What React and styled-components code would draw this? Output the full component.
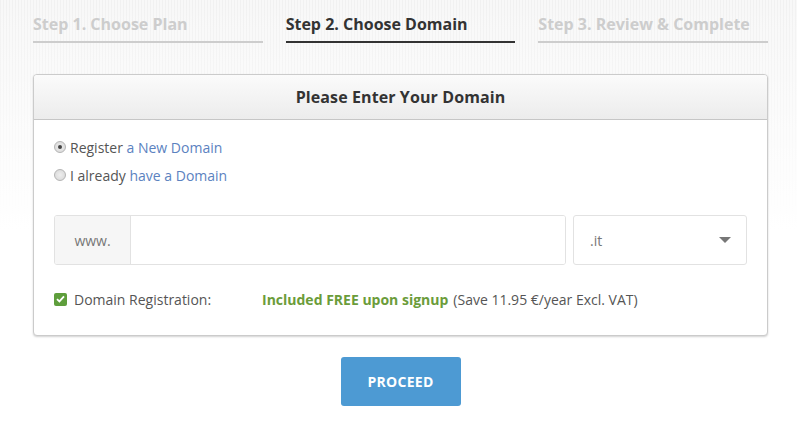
import React from "react"
import styled, { createGlobalStyle } from "styled-components"

const GlobalStyle = createGlobalStyle`
  html, body {
    margin: 0;
    padding: 0;
  }
  *, *::before, *::after {
    box-sizing: border-box;
  }
  body {
    font-family: "Open Sans", "Liberation Sans", sans-serif;
    background-color: #fff;
    background-image:
      linear-gradient(to bottom, rgba(255,255,255,0) 0px, #fff 230px),
      repeating-linear-gradient(to right, #f1f1f1 0px, #f1f1f1 1px, #f8f8f8 1px, #f8f8f8 3px);
    background-repeat: no-repeat;
    background-size: 100% 240px;
    min-height: 424px;
  }
`

const steps = [
  { label: "Step 1. Choose Plan", active: false },
  { label: "Step 2. Choose Domain", active: true },
  { label: "Step 3. Review & Complete", active: false },
]

export default function App() {
  return (
    <>
      <GlobalStyle />
      <Page>
        <Steps>
          {steps.map(s => (
            <Step key={s.label} active={s.active}>
              {s.label}
            </Step>
          ))}
        </Steps>

        <Card>
          <CardHeader>Please Enter Your Domain</CardHeader>
          <CardBody>
            <RadioRow>
              <Radio checked />
              Register <Link>a New Domain</Link>
            </RadioRow>
            <RadioRow>
              <Radio />
              I already <Link>have a Domain</Link>
            </RadioRow>

            <DomainRow>
              <InputGroup>
                <Addon>www.</Addon>
                <Input />
              </InputGroup>
              <Select>
                .it
                <Caret />
              </Select>
            </DomainRow>

            <CheckRow>
              <CheckLabel>
                <Checkbox>
                  <svg width="9" height="8" viewBox="0 0 9 8">
                    <path d="M1 4.2 L3.4 6.4 L8 1.4" fill="none" stroke="#fff" strokeWidth="1.8" />
                  </svg>
                </Checkbox>
                Domain Registration:
              </CheckLabel>
              <Free>Included FREE upon signup</Free>
              <Note>(Save 11.95 €/year Excl. VAT)</Note>
            </CheckRow>
          </CardBody>
        </Card>

        <Actions>
          <Button>PROCEED</Button>
        </Actions>
      </Page>
    </>
  )
}

const Page = styled.div`
  width: 735px;
  margin: 0 0 0 33px;
`

const Steps = styled.div`
  display: grid;
  grid-template-columns: repeat(3, 1fr);
  column-gap: 23px;
`

const Step = styled.div`
  padding: 13px 0 6px;
  font-size: 16px;
  line-height: 22px;
  font-weight: 700;
  color: ${props => (props.active ? "#333" : "#cdcdcd")};
  border-bottom: 2px solid ${props => (props.active ? "#333" : "#cdcdcd")};
`

const Card = styled.div`
  margin-top: 31px;
  background: #fff;
  border: 1px solid #cbcbcb;
  border-radius: 4px;
  box-shadow: 0 1px 2px rgba(0, 0, 0, 0.18);
  overflow: hidden;
`

const CardHeader = styled.div`
  height: 45px;
  line-height: 44px;
  text-align: center;
  font-size: 16px;
  font-weight: 700;
  letter-spacing: 0.1px;
  color: #333;
  background: linear-gradient(to bottom, #fbfbfb, #ececec);
  border-bottom: 1px solid #c6c6c6;
`

const CardBody = styled.div`
  padding: 13px 20px 25px;
  font-size: 14px;
  color: #555;
`

const RadioRow = styled.div`
  display: flex;
  align-items: center;
  height: 28px;
  white-space: pre;
`

const Radio = styled.span`
  width: 12px;
  height: 12px;
  margin-right: 4px;
  border-radius: 50%;
  border: 1px solid #b4b4b4;
  background: radial-gradient(circle, #eee 0%, #d6d6d6 100%);
  position: relative;

  &::after {
    content: "";
    display: ${props => (props.checked ? "block" : "none")};
    position: absolute;
    left: 3px;
    top: 3px;
    width: 4px;
    height: 4px;
    border-radius: 50%;
    background: #444;
  }
`

const Link = styled.span`
  color: #5b82bf;
`

const DomainRow = styled.div`
  display: flex;
  gap: 7px;
  margin-top: 26px;
  height: 50px;
`

const InputGroup = styled.div`
  flex: 1;
  display: flex;
  border: 1px solid #e2e2e2;
  border-radius: 3px;
  overflow: hidden;
`

const Addon = styled.div`
  width: 76px;
  display: flex;
  align-items: center;
  justify-content: center;
  background: #f6f6f6;
  border-right: 1px solid #e2e2e2;
  color: #777;
  font-size: 14px;
`

const Input = styled.div`
  flex: 1;
  background: #fff;
`

const Select = styled.div`
  width: 174px;
  display: flex;
  align-items: center;
  justify-content: space-between;
  padding: 0 15px 0 16px;
  border: 1px solid #e2e2e2;
  border-radius: 3px;
  color: #777;
  font-size: 14px;
`

const Caret = styled.span`
  width: 0;
  height: 0;
  border-left: 6px solid transparent;
  border-right: 6px solid transparent;
  border-top: 6px solid #777;
`

const CheckRow = styled.div`
  display: flex;
  align-items: center;
  height: 22px;
  margin-top: 23px;
  white-space: pre;
`

const CheckLabel = styled.div`
  display: flex;
  align-items: center;
  width: 208px;
`

const Checkbox = styled.span`
  width: 13px;
  height: 13px;
  margin-right: 7px;
  border-radius: 2px;
  background: #5e9e3c;
  display: flex;
  align-items: center;
  justify-content: center;
`

const Free = styled.span`
  font-weight: 700;
  color: #6b9c3a;
  margin-right: 5px;
`

const Note = styled.span`
  color: #555;
`

const Actions = styled.div`
  display: flex;
  justify-content: center;
  margin-top: 21px;
`

const Button = styled.div`
  width: 120px;
  height: 49px;
  display: flex;
  align-items: center;
  justify-content: center;
  background: #4d9ad3;
  border-radius: 3px;
  color: #fff;
  font-size: 14px;
  font-weight: 700;
  letter-spacing: 0.3px;
`
